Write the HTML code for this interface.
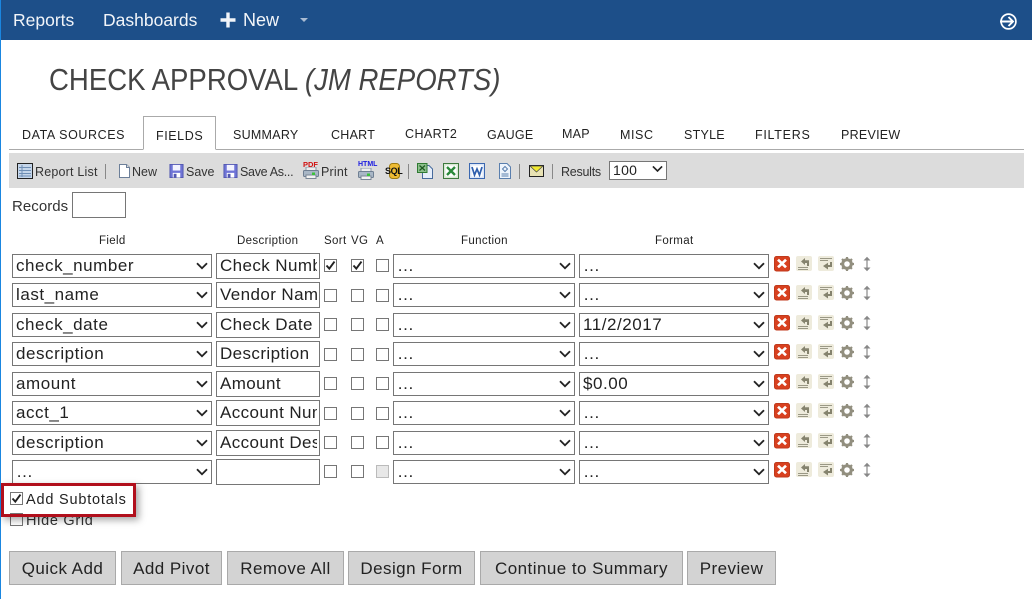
<!DOCTYPE html>
<html><head><meta charset="utf-8"><title>Check Approval</title>
<style>
html,body{margin:0;padding:0;background:#fff}
body{width:1032px;height:599px;position:relative;overflow:hidden;font-family:"Liberation Sans",sans-serif;color:#222}
.t{position:absolute;white-space:nowrap;line-height:20px}
.nav{color:#f2f5f9;font-size:17.5px;top:10px}
.tab{font-size:12.5px;letter-spacing:.58px;color:#222;top:125px}
.tn{letter-spacing:.26px}
.tb{font-size:12.5px;top:162px;color:#333}
.h{font-size:11.5px;letter-spacing:.35px;top:231px;color:#222}
select,input{position:absolute;box-sizing:border-box;margin:0;background:#fff;border:1px solid #767676;border-radius:0;font-family:"Liberation Sans",sans-serif;color:#222;outline:0}
select{appearance:none;-webkit-appearance:none;height:24px;font-size:17px;letter-spacing:.55px;padding:0 0 1px 3px}
input.d{width:104px;height:26px;font-size:17px;left:216px;padding:0 2px 0 3px;letter-spacing:.4px}
.c{position:absolute;box-sizing:border-box;width:13px;height:13px;border:1px solid #767676;background:#fff}
.sv{position:absolute;overflow:visible}
.btn{position:absolute;top:551px;height:34px;box-sizing:border-box;background:#d3d3d3;border:1px solid #a9a9a9;font-size:17px;letter-spacing:.45px;line-height:33px;text-align:center;color:#222}
.sep{position:absolute;top:164px;width:1px;height:15px;background:#888}
</style></head><body>
<svg width="0" height="0" style="position:absolute"><defs>
<symbol id="chev" viewBox="0 0 12 8"><path d="M1 1.2L6 6.2L11 1.2" fill="none" stroke="#222" stroke-width="1.8"/></symbol>
<symbol id="chk" viewBox="0 0 13 13"><path d="M2.5 6.5L5.3 9.6L10.5 2.6" fill="none" stroke="#222" stroke-width="1.9"/></symbol>
<symbol id="x" viewBox="0 0 16 16"><rect x=".5" y=".5" width="15" height="14.5" rx="2" fill="#d8401f" stroke="#c03a1c"/><path d="M4 3.7L12 11.3M12 3.7L4 11.3" stroke="#fff" stroke-width="2.7"/></symbol>
<symbol id="l" viewBox="0 0 16 16"><rect width="16" height="15" rx="2" fill="#eeebdc"/><path d="M2 11.5H12M2 13.5H12" stroke="#9a9885"/><path d="M5 5.5L9 2V4.2H13V10H11V7H9V9Z" fill="#85836e"/></symbol>
<symbol id="r" viewBox="0 0 16 16"><rect width="16" height="15" rx="2" fill="#eeebdc"/><path d="M2 2.5H14M2 4.5H10" stroke="#9a9885"/><path d="M14 6V11H10V13.5L5 10L10 6.8V9H12V6Z" fill="#85836e"/></symbol>
<symbol id="g" viewBox="0 0 16 16"><circle cx="8" cy="8" r="4.3" fill="none" stroke="#928f7f" stroke-width="3"/><path d="M8 1V15M1 8H15M3 3L13 13M13 3L3 13" stroke="#928f7f" stroke-width="2.2" stroke-dasharray="2.4 9.2"/></symbol>
<symbol id="a" viewBox="0 0 10 16"><path d="M5 2V14" stroke="#888" stroke-width="1.2"/><path d="M1.5 4.5L5 .8L8.5 4.5ZM1.5 11.5L5 15.2L8.5 11.5Z" fill="#888"/></symbol>
<symbol id="fl" viewBox="0 0 16 16"><path d="M1 1H15V15H1Z" fill="#6f74d6" stroke="#5257b0"/><rect x="4" y="1.5" width="8" height="6" fill="#f3f3ff"/><rect x="4" y="10" width="8" height="5" fill="#fff"/><rect x="5" y="11" width="3" height="4" fill="#5257b0"/></symbol>
<symbol id="pr" viewBox="0 0 16 12"><rect x="3" y="0" width="10" height="4" fill="#eee" stroke="#8a97a8"/><rect x=".5" y="3.5" width="15" height="6" rx="1" fill="#a9b7c6" stroke="#6f7f92"/><rect x="3" y="8" width="10" height="3.5" fill="#f2f2f2" stroke="#7a8796"/><rect x="9" y="5.5" width="3" height="2.5" fill="#3ac23a"/></symbol>
</defs></svg>

<div style="position:absolute;left:0;top:0;width:1032px;height:40px;background:#1d4f89"></div>
<div style="position:absolute;left:0;top:0;width:1px;height:599px;background:#1a86e0"></div>
<span class="t nav" style="left:13px">Reports</span>
<span class="t nav" style="left:103px">Dashboards</span>
<svg class="sv" style="left:220px;top:12px" width="16" height="16"><path d="M8 .5V15.5M.5 8H15.5" stroke="#f2f5f9" stroke-width="3.4"/></svg>
<span class="t nav" style="left:243px;font-size:18px">New</span>
<svg class="sv" style="left:300px;top:18px" width="9" height="5"><path d="M0 0H8L4 4Z" fill="#a9bbd2"/></svg>
<svg class="sv" style="left:999px;top:12px" width="19" height="19"><circle cx="9.5" cy="9.5" r="7.4" fill="none" stroke="#fff" stroke-width="1.7"/><path d="M1 9.5H14M9.5 5L14 9.5L9.5 14" fill="none" stroke="#fff" stroke-width="1.9"/></svg>

<span class="t" style="left:49px;top:62px;font-size:30.5px;line-height:36px;color:#444;transform:scaleX(.904);transform-origin:0 0">CHECK APPROVAL <i>(JM REPORTS)</i></span>

<div style="position:absolute;left:9px;top:149px;width:1015px;height:1px;background:#aaa"></div>
<div style="position:absolute;left:143px;top:116px;width:73px;height:34px;box-sizing:border-box;border:1px solid #aaa;border-bottom:1px solid #fff;background:#fff"></div>
<span class="t tab" style="left:22px">DATA SOURCES</span>
<span class="t tab" style="left:156px;top:126px">FIELDS</span>
<span class="t tab tn" style="left:233px">SUMMARY</span>
<span class="t tab tn" style="left:331px">CHART</span>
<span class="t tab" style="left:405px;top:124px;letter-spacing:.42px">CHART2</span>
<span class="t tab tn" style="left:487px">GAUGE</span>
<span class="t tab tn" style="left:562px;top:124px">MAP</span>
<span class="t tab" style="left:620px">MISC</span>
<span class="t tab tn" style="left:684px">STYLE</span>
<span class="t tab" style="left:755px;letter-spacing:.72px">FILTERS</span>
<span class="t tab tn" style="left:841px">PREVIEW</span>

<div style="position:absolute;left:9px;top:153px;width:1015px;height:35px;background:#dcdcdc"></div>
<svg class="sv" style="left:17px;top:163px" width="16" height="16"><rect x=".5" y=".5" width="15" height="15" fill="#c5d6ea" stroke="#222"/><path d="M2 4.5H14M2 7.5H14M2 10.5H14M2 13H14M5 2V14" stroke="#6f8fb5"/></svg>
<span class="t tb" style="left:35px;letter-spacing:.2px">Report List</span>
<div class="sep" style="left:105px"></div>
<svg class="sv" style="left:118px;top:163px" width="13" height="16"><path d="M1.5 1.5H8.5L11.5 4.5V14.5H1.5Z" fill="#fff" stroke="#6c7f99"/><path d="M8.5 1.5V4.5H11.5" fill="#ddd" stroke="#6c7f99"/></svg>
<span class="t tb" style="left:132px">New</span>
<svg class="sv" style="left:169px;top:163px" width="15" height="16" viewBox="0 0 16 16"><use href="#fl"/></svg>
<span class="t tb" style="left:186px">Save</span>
<svg class="sv" style="left:223px;top:163px" width="15" height="16" viewBox="0 0 16 16"><use href="#fl"/></svg>
<span class="t tb" style="left:240px;letter-spacing:-.3px">Save As...</span>
<svg class="sv" style="left:303px;top:167px" width="16" height="12"><use href="#pr"/></svg>
<span class="t" style="left:303px;top:161px;font-size:7.5px;line-height:8px;font-weight:bold;color:#d01010">PDF</span>
<span class="t tb" style="left:321px;letter-spacing:.2px">Print</span>
<svg class="sv" style="left:358px;top:168px" width="16" height="12"><use href="#pr"/></svg>
<span class="t" style="left:358px;top:161px;font-size:7px;line-height:8px;font-weight:bold;color:#1a1ae0">HTML</span>
<svg class="sv" style="left:389px;top:163px" width="11" height="16"><rect x=".5" y=".5" width="10" height="15" rx="3" fill="#eebb33" stroke="#a07c10"/></svg>
<span class="t" style="left:385px;top:166px;font-size:9px;line-height:11px;font-weight:bold;letter-spacing:-.4px;color:#111">SQL</span>
<div class="sep" style="left:408px"></div>
<svg class="sv" style="left:417px;top:163px" width="16" height="16"><path d="M5.5 2.5H12L15.5 6V15.5H5.5Z" fill="#e6eefa" stroke="#476b9c"/><rect x=".5" y=".5" width="9.5" height="9" fill="#8dc08d" stroke="#2f7a32"/><path d="M2.5 2.5L8 7.5M8 2.5L2.5 7.5" stroke="#1e5a22" stroke-width="1.3"/></svg>
<svg class="sv" style="left:443px;top:163px" width="16" height="16"><rect x=".5" y=".5" width="15" height="15" fill="#d8e8d4" stroke="#3d7a3d"/><rect x="2.5" y="2.5" width="11" height="11" fill="#fff"/><path d="M4 4L12 12M12 4L4 12" stroke="#2a8a3a" stroke-width="2.4"/></svg>
<svg class="sv" style="left:469px;top:163px" width="16" height="16"><rect x=".5" y=".5" width="15" height="15" fill="#dbe6f7" stroke="#3c68b0"/><rect x="2.5" y="2.5" width="11" height="11" fill="#fff"/><path d="M3 4L5.5 12L8 6L10.5 12L13 4" fill="none" stroke="#2f5fae" stroke-width="1.7"/></svg>
<svg class="sv" style="left:498px;top:163px" width="14" height="16"><path d="M1.5 .5H9L12.5 4V15.5H1.5Z" fill="#eef4fc" stroke="#5a7fae"/><path d="M7 3.5L9.5 6L7 8.5L4.5 6Z" fill="none" stroke="#5a7fae"/><path d="M3.5 11H10.5M3.5 13H10.5" stroke="#5a7fae"/></svg>
<div class="sep" style="left:519px"></div>
<svg class="sv" style="left:529px;top:165px" width="15" height="12"><rect x=".5" y=".5" width="14" height="11" fill="#e8e2b4" stroke="#222"/><path d="M1 1L7.5 7L14 1Z" fill="#f2ea30" stroke="#444" stroke-width=".7"/></svg>
<div class="sep" style="left:552px"></div>
<span class="t tb" style="left:561px;letter-spacing:-.25px">Results</span>
<select style="left:609px;top:161px;width:58px;height:19px;font-size:14px;letter-spacing:.3px;padding-left:3px"><option>100</option></select>
<svg class="sv" style="left:652px;top:165px" width="11" height="8"><use href="#chev"/></svg>

<span class="t" style="left:12px;top:197px;font-size:15px;letter-spacing:.05px;color:#333">Records</span>
<input style="left:72px;top:192px;width:54px;height:26px">

<span class="t h" style="left:99px">Field</span>
<span class="t h" style="left:237px">Description</span>
<span class="t h" style="left:324px">Sort</span>
<span class="t h" style="left:351px">VG</span>
<span class="t h" style="left:376px">A</span>
<span class="t h" style="left:461px">Function</span>
<span class="t h" style="left:655px">Format</span>

<!-- row 1 -->
<select style="left:12px;top:254px;width:200px"><option>check_number</option></select><svg class="sv" style="left:196px;top:262px" width="12" height="8"><use href="#chev"/></svg>
<input class="d" style="top:253px" value="Check Number">
<div class="c" style="left:324px;top:259px"></div><svg class="sv" style="left:324px;top:259px" width="13" height="13"><use href="#chk"/></svg>
<div class="c" style="left:351px;top:259px"></div><svg class="sv" style="left:351px;top:259px" width="13" height="13"><use href="#chk"/></svg>
<div class="c" style="left:376px;top:259px"></div>
<select style="left:393px;top:254px;width:182px"><option>…</option></select><svg class="sv" style="left:559px;top:262px" width="12" height="8"><use href="#chev"/></svg>
<select style="left:579px;top:254px;width:190px"><option>…</option></select><svg class="sv" style="left:753px;top:262px" width="12" height="8"><use href="#chev"/></svg>
<svg class="sv" style="left:774px;top:256px" width="16" height="16"><use href="#x"/></svg><svg class="sv" style="left:796px;top:256px" width="16" height="16"><use href="#l"/></svg><svg class="sv" style="left:818px;top:256px" width="16" height="16"><use href="#r"/></svg><svg class="sv" style="left:839px;top:256px" width="16" height="16"><use href="#g"/></svg><svg class="sv" style="left:862px;top:256px" width="10" height="16"><use href="#a"/></svg>
<!-- row 2 -->
<select style="left:12px;top:283px;width:200px"><option>last_name</option></select><svg class="sv" style="left:196px;top:291px" width="12" height="8"><use href="#chev"/></svg>
<input class="d" style="top:282px" value="Vendor Name">
<div class="c" style="left:324px;top:289px"></div><div class="c" style="left:351px;top:289px"></div><div class="c" style="left:376px;top:289px"></div>
<select style="left:393px;top:283px;width:182px"><option>…</option></select><svg class="sv" style="left:559px;top:291px" width="12" height="8"><use href="#chev"/></svg>
<select style="left:579px;top:283px;width:190px"><option>…</option></select><svg class="sv" style="left:753px;top:291px" width="12" height="8"><use href="#chev"/></svg>
<svg class="sv" style="left:774px;top:285px" width="16" height="16"><use href="#x"/></svg><svg class="sv" style="left:796px;top:285px" width="16" height="16"><use href="#l"/></svg><svg class="sv" style="left:818px;top:285px" width="16" height="16"><use href="#r"/></svg><svg class="sv" style="left:839px;top:285px" width="16" height="16"><use href="#g"/></svg><svg class="sv" style="left:862px;top:285px" width="10" height="16"><use href="#a"/></svg>
<!-- row 3 -->
<select style="left:12px;top:313px;width:200px"><option>check_date</option></select><svg class="sv" style="left:196px;top:321px" width="12" height="8"><use href="#chev"/></svg>
<input class="d" style="top:312px" value="Check Date">
<div class="c" style="left:324px;top:318px"></div><div class="c" style="left:351px;top:318px"></div><div class="c" style="left:376px;top:318px"></div>
<select style="left:393px;top:313px;width:182px"><option>…</option></select><svg class="sv" style="left:559px;top:321px" width="12" height="8"><use href="#chev"/></svg>
<select style="left:579px;top:313px;width:190px"><option>11/2/2017</option></select><svg class="sv" style="left:753px;top:321px" width="12" height="8"><use href="#chev"/></svg>
<svg class="sv" style="left:774px;top:315px" width="16" height="16"><use href="#x"/></svg><svg class="sv" style="left:796px;top:315px" width="16" height="16"><use href="#l"/></svg><svg class="sv" style="left:818px;top:315px" width="16" height="16"><use href="#r"/></svg><svg class="sv" style="left:839px;top:315px" width="16" height="16"><use href="#g"/></svg><svg class="sv" style="left:862px;top:315px" width="10" height="16"><use href="#a"/></svg>
<!-- row 4 -->
<select style="left:12px;top:342px;width:200px"><option>description</option></select><svg class="sv" style="left:196px;top:350px" width="12" height="8"><use href="#chev"/></svg>
<input class="d" style="top:341px" value="Description">
<div class="c" style="left:324px;top:348px"></div><div class="c" style="left:351px;top:348px"></div><div class="c" style="left:376px;top:348px"></div>
<select style="left:393px;top:342px;width:182px"><option>…</option></select><svg class="sv" style="left:559px;top:350px" width="12" height="8"><use href="#chev"/></svg>
<select style="left:579px;top:342px;width:190px"><option>…</option></select><svg class="sv" style="left:753px;top:350px" width="12" height="8"><use href="#chev"/></svg>
<svg class="sv" style="left:774px;top:344px" width="16" height="16"><use href="#x"/></svg><svg class="sv" style="left:796px;top:344px" width="16" height="16"><use href="#l"/></svg><svg class="sv" style="left:818px;top:344px" width="16" height="16"><use href="#r"/></svg><svg class="sv" style="left:839px;top:344px" width="16" height="16"><use href="#g"/></svg><svg class="sv" style="left:862px;top:344px" width="10" height="16"><use href="#a"/></svg>
<!-- row 5 -->
<select style="left:12px;top:372px;width:200px"><option>amount</option></select><svg class="sv" style="left:196px;top:380px" width="12" height="8"><use href="#chev"/></svg>
<input class="d" style="top:371px" value="Amount">
<div class="c" style="left:324px;top:377px"></div><div class="c" style="left:351px;top:377px"></div><div class="c" style="left:376px;top:377px"></div>
<select style="left:393px;top:372px;width:182px"><option>…</option></select><svg class="sv" style="left:559px;top:380px" width="12" height="8"><use href="#chev"/></svg>
<select style="left:579px;top:372px;width:190px"><option>$0.00</option></select><svg class="sv" style="left:753px;top:380px" width="12" height="8"><use href="#chev"/></svg>
<svg class="sv" style="left:774px;top:374px" width="16" height="16"><use href="#x"/></svg><svg class="sv" style="left:796px;top:374px" width="16" height="16"><use href="#l"/></svg><svg class="sv" style="left:818px;top:374px" width="16" height="16"><use href="#r"/></svg><svg class="sv" style="left:839px;top:374px" width="16" height="16"><use href="#g"/></svg><svg class="sv" style="left:862px;top:374px" width="10" height="16"><use href="#a"/></svg>
<!-- row 6 -->
<select style="left:12px;top:401px;width:200px"><option>acct_1</option></select><svg class="sv" style="left:196px;top:409px" width="12" height="8"><use href="#chev"/></svg>
<input class="d" style="top:400px" value="Account Number">
<div class="c" style="left:324px;top:407px"></div><div class="c" style="left:351px;top:407px"></div><div class="c" style="left:376px;top:407px"></div>
<select style="left:393px;top:401px;width:182px"><option>…</option></select><svg class="sv" style="left:559px;top:409px" width="12" height="8"><use href="#chev"/></svg>
<select style="left:579px;top:401px;width:190px"><option>…</option></select><svg class="sv" style="left:753px;top:409px" width="12" height="8"><use href="#chev"/></svg>
<svg class="sv" style="left:774px;top:403px" width="16" height="16"><use href="#x"/></svg><svg class="sv" style="left:796px;top:403px" width="16" height="16"><use href="#l"/></svg><svg class="sv" style="left:818px;top:403px" width="16" height="16"><use href="#r"/></svg><svg class="sv" style="left:839px;top:403px" width="16" height="16"><use href="#g"/></svg><svg class="sv" style="left:862px;top:403px" width="10" height="16"><use href="#a"/></svg>
<!-- row 7 -->
<select style="left:12px;top:431px;width:200px"><option>description</option></select><svg class="sv" style="left:196px;top:439px" width="12" height="8"><use href="#chev"/></svg>
<input class="d" style="top:430px" value="Account Description">
<div class="c" style="left:324px;top:436px"></div><div class="c" style="left:351px;top:436px"></div><div class="c" style="left:376px;top:436px"></div>
<select style="left:393px;top:431px;width:182px"><option>…</option></select><svg class="sv" style="left:559px;top:439px" width="12" height="8"><use href="#chev"/></svg>
<select style="left:579px;top:431px;width:190px"><option>…</option></select><svg class="sv" style="left:753px;top:439px" width="12" height="8"><use href="#chev"/></svg>
<svg class="sv" style="left:774px;top:433px" width="16" height="16"><use href="#x"/></svg><svg class="sv" style="left:796px;top:433px" width="16" height="16"><use href="#l"/></svg><svg class="sv" style="left:818px;top:433px" width="16" height="16"><use href="#r"/></svg><svg class="sv" style="left:839px;top:433px" width="16" height="16"><use href="#g"/></svg><svg class="sv" style="left:862px;top:433px" width="10" height="16"><use href="#a"/></svg>
<!-- row 8 -->
<select style="left:12px;top:460px;width:200px"><option>…</option></select><svg class="sv" style="left:196px;top:468px" width="12" height="8"><use href="#chev"/></svg>
<input class="d" style="top:459px" value="">
<div class="c" style="left:324px;top:465px"></div><div class="c" style="left:351px;top:465px"></div><div class="c" style="left:376px;top:465px;background:#e8e8e8;border-color:#bbb"></div>
<select style="left:393px;top:460px;width:182px"><option>…</option></select><svg class="sv" style="left:559px;top:468px" width="12" height="8"><use href="#chev"/></svg>
<select style="left:579px;top:460px;width:190px"><option>…</option></select><svg class="sv" style="left:753px;top:468px" width="12" height="8"><use href="#chev"/></svg>
<svg class="sv" style="left:774px;top:462px" width="16" height="16"><use href="#x"/></svg><svg class="sv" style="left:796px;top:462px" width="16" height="16"><use href="#l"/></svg><svg class="sv" style="left:818px;top:462px" width="16" height="16"><use href="#r"/></svg><svg class="sv" style="left:839px;top:462px" width="16" height="16"><use href="#g"/></svg><svg class="sv" style="left:862px;top:462px" width="10" height="16"><use href="#a"/></svg>

<div class="c" style="left:10px;top:513px"></div>
<span class="t" style="left:26px;top:511px;font-size:14.5px;letter-spacing:.7px;color:#333">Hide Grid</span>
<div style="position:absolute;left:1px;top:483px;width:135px;height:34px;box-sizing:border-box;border:3px solid #b10f1c;box-shadow:3px 3px 7px rgba(0,0,0,.35)"></div>
<div class="c" style="left:10px;top:492px"></div><svg class="sv" style="left:10px;top:492px" width="13" height="13"><use href="#chk"/></svg>
<span class="t" style="left:26px;top:490px;font-size:14.5px;letter-spacing:.8px;color:#222">Add Subtotals</span>

<div class="btn" style="left:9px;width:107px">Quick Add</div>
<div class="btn" style="left:121px;width:101px">Add Pivot</div>
<div class="btn" style="left:227px;width:117px">Remove All</div>
<div class="btn" style="left:348px;width:127px">Design Form</div>
<div class="btn" style="left:480px;width:203px">Continue to Summary</div>
<div class="btn" style="left:687px;width:89px">Preview</div>
</body></html>
